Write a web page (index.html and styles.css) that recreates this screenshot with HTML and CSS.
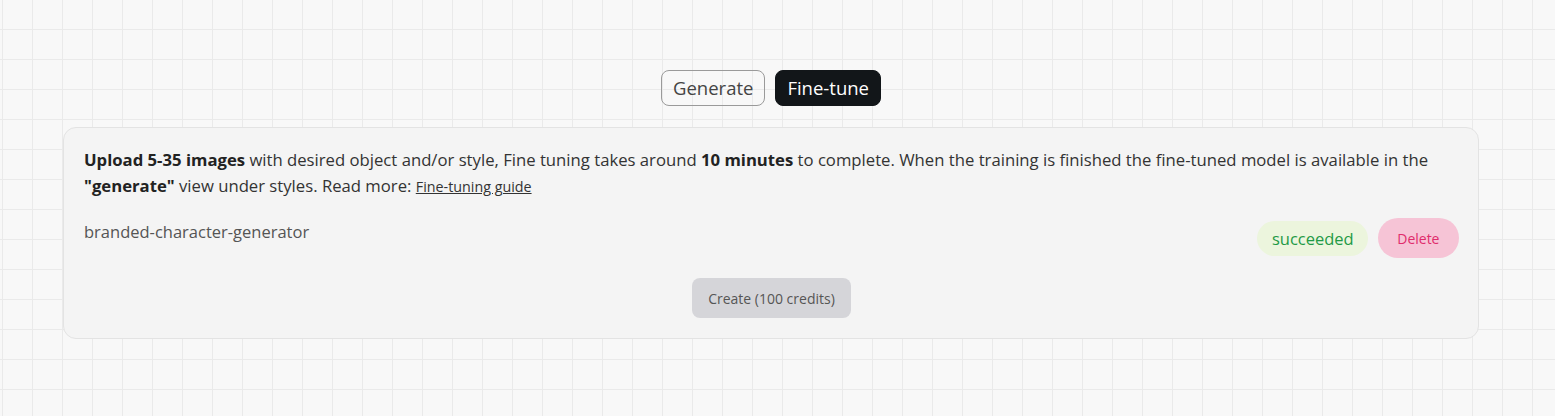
FILE: index.html
```html
<!DOCTYPE html>
<html lang="en">
<head>
<meta charset="utf-8">
<title>Fine-tune</title>
<link rel="stylesheet" href="styles.css">
</head>
<body>
<main class="page">
  <nav class="tabs">
    <button class="tab">Generate</button>
    <button class="tab tab-active">Fine-tune</button>
  </nav>
  <section class="card">
    <p class="intro"><strong>Upload 5-35 images</strong> with desired object and/or style, Fine tuning takes around <strong>10 minutes</strong> to complete. When the training is finished the fine-tuned model is available in the <strong>"generate"</strong> view under styles. Read more: <a class="guide" href="#">Fine-tuning guide</a></p>
    <div class="model-row">
      <span class="model-name">branded-character-generator</span>
      <div class="model-actions">
        <span class="status">succeeded</span>
        <button class="delete">Delete</button>
      </div>
    </div>
    <div class="create-wrap">
      <button class="create">Create (100 credits)</button>
    </div>
  </section>
</main>
</body>
</html>
```
FILE: styles.css
```css
* { box-sizing: border-box; }
html, body { margin: 0; height: 100%; }
body {
  font-family: "Open Sans", "Noto Sans", sans-serif;
  color: #333;
  background-color: #f8f8f8;
  background-image:
    linear-gradient(to right, #eaeaea 1px, transparent 1px),
    linear-gradient(to bottom, #eaeaea 1px, transparent 1px);
  background-size: 30px 30px;
  background-position: 2px -1px;
}
.page {
  padding: 70px 76px 0 63px;
  display: flex;
  flex-direction: column;
}
.tabs {
  display: flex;
  justify-content: center;
  gap: 10px;
}
.tab {
  font-family: inherit;
  font-size: 18.5px;
  line-height: 24px;
  height: 36px;
  padding: 5px 11px;
  border-radius: 8px;
  border: 1px solid #9a9a9a;
  background: transparent;
  color: #444;
}
.tab-active {
  background: #121619;
  border-color: #121619;
  color: #fff;
}
.card {
  margin-top: 21px;
  width: 1416px;
  background: #f4f4f4;
  border: 1px solid #e3e3e3;
  border-radius: 13px;
  padding: 19px 19px 20px 20px;
}
.intro {
  margin: 0;
  font-size: 16.7px;
  line-height: 26px;
  color: #333;
}
.intro strong { color: #222; font-weight: 700; }
.guide {
  color: #333;
  font-size: 14.3px;
  text-decoration: underline;
}
.model-row {
  margin-top: 18px;
  display: flex;
  justify-content: space-between;
  align-items: flex-start;
}
.model-name {
  font-size: 16.5px;
  line-height: 24px;
  color: #555;
  margin-top: 2px;
}
.model-actions {
  display: flex;
  align-items: center;
  gap: 10px;
}
.status {
  font-size: 16.5px;
  line-height: 23px;
  padding: 6px 14px 6px 15px;
  border-radius: 999px;
  background: #ecf5dd;
  color: #1f9a46;
}
.delete {
  font-family: inherit;
  font-size: 14px;
  height: 40px;
  padding: 0 19.5px;
  border: none;
  border-radius: 999px;
  background: #f6c4d6;
  color: #e02c6c;
}
.create-wrap {
  margin-top: 20px;
  display: flex;
  justify-content: center;
}
.create {
  font-family: inherit;
  font-size: 14px;
  height: 40px;
  padding: 0 16.5px;
  border: none;
  border-radius: 8px;
  background: #d5d5d9;
  color: #555;
}
```
